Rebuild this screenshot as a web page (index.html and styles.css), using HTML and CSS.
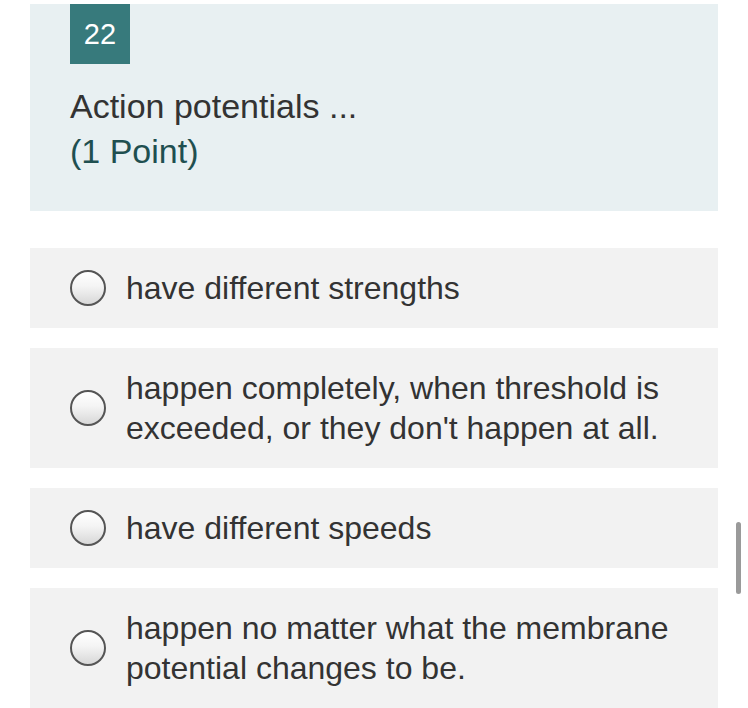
FILE: index.html
```html
<!DOCTYPE html>
<html>
<head>
<meta charset="utf-8">
<link rel="stylesheet" href="styles.css">
</head>
<body>
<div class="page">
  <div class="question">
    <div class="badge">22</div>
    <div class="title">Action potentials ...</div>
    <div class="points">(1 Point)</div>
  </div>
  <div class="options">
    <label class="option"><span class="radio"></span><span class="text">have different strengths</span></label>
    <label class="option"><span class="radio"></span><span class="text">happen completely, when threshold is exceeded, or they don't happen at all.</span></label>
    <label class="option"><span class="radio"></span><span class="text">have different speeds</span></label>
    <label class="option"><span class="radio"></span><span class="text">happen no matter what the membrane potential changes to be.</span></label>
  </div>
</div>
<div class="scrollbar"></div>
</body>
</html>
```
FILE: styles.css
```css
html, body {
  margin: 0;
  padding: 0;
  background: #ffffff;
  overflow: hidden;
}
body {
  font-family: "Liberation Sans", Arial, sans-serif;
  color: #333333;
  width: 748px;
  height: 708px;
}
.page {
  padding: 4px 30px 0 30px;
  width: 688px;
}
.question {
  background: #e8f0f2;
  padding: 0 40px 39px 40px;
  height: 168px;
}
.badge {
  width: 60px;
  height: 60px;
  background: #377a7c;
  color: #ffffff;
  font-size: 29px;
  display: flex;
  align-items: center;
  justify-content: center;
  margin-bottom: 20px;
}
.title {
  font-size: 34px;
  line-height: 45px;
  color: #333333;
}
.points {
  font-size: 34px;
  line-height: 45px;
  color: #1f4f50;
}
.options {
  margin-top: 37px;
  display: flex;
  flex-direction: column;
  gap: 20px;
}
.option {
  background: #f2f2f2;
  padding: 20px 40px 20px 40px;
  display: flex;
  align-items: center;
  gap: 20px;
}
.radio {
  flex: 0 0 auto;
  width: 32px;
  height: 32px;
  border: 2px solid #555555;
  border-radius: 50%;
  background: linear-gradient(180deg, #ffffff 0%, #f4f4f4 45%, #d8d8d8 100%);
}
.text {
  font-size: 32px;
  line-height: 40px;
  color: #333333;
}
.scrollbar {
  position: absolute;
  left: 736px;
  top: 522px;
  width: 5px;
  height: 72px;
  border-radius: 3px;
  background: #9a9a9a;
}
```
